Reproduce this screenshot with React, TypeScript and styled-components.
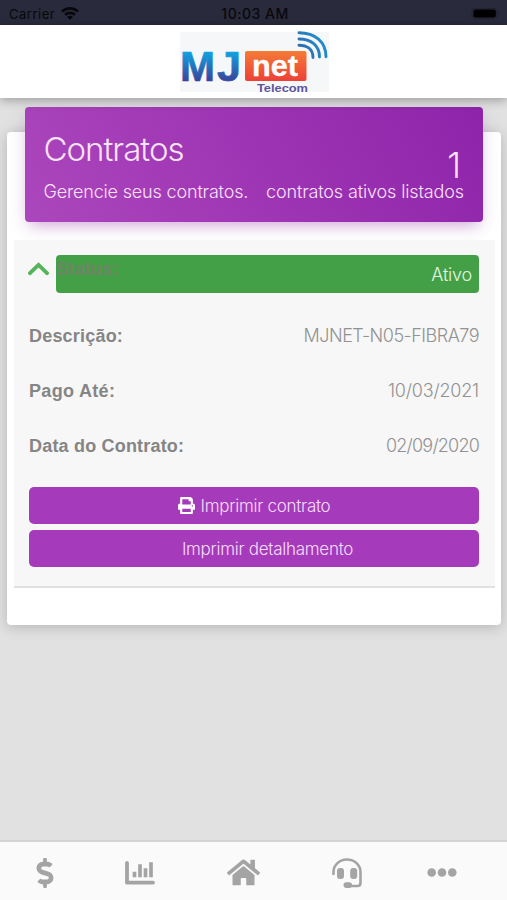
import React from "react";
import styled, { createGlobalStyle } from "styled-components";
import { FaDollarSign, FaHome, FaPrint } from "react-icons/fa";

const light = `"Inter", "Liberation Sans", sans-serif`;
const bold = `"Liberation Sans", Arial, sans-serif`;

const GlobalStyle = createGlobalStyle`
  * { box-sizing: border-box; }
  body { margin: 0; background: #e1e1e1; font-family: ${light}; font-weight: 300; }
`;

const Screen = styled.div`
  width: 507px;
  height: 900px;
  display: flex;
  flex-direction: column;
  overflow: hidden;
  background: #e1e1e1;
`;

const StatusBar = styled.div`
  height: 25px;
  flex: none;
  display: grid;
  grid-template-columns: 1fr auto 1fr;
  align-items: center;
  padding: 2px 6px 0 9px;
  background: #292a3b;
  color: #08080c;
  font-size: 13px;
  font-weight: 400;
`;

const Carrier = styled.div`
  display: flex;
  align-items: center;
  gap: 6px;
  letter-spacing: 0.5px;
`;

const Clock = styled.div`
  font-weight: 500;
  font-size: 14px;
  letter-spacing: 0.5px;
`;

const BatterySlot = styled.div`
  display: flex;
  justify-content: flex-end;
`;

const Header = styled.header`
  height: 73px;
  flex: none;
  display: flex;
  justify-content: center;
  padding: 6px 0 0 1px;
  background: #fff;
  box-shadow: 0 2px 10px rgba(0, 0, 0, 0.32);
  z-index: 1;
`;

const Main = styled.main`
  flex: 1;
  padding: 34px 6px 0 7px;
`;

const Card = styled.section`
  height: 493px;
  padding: 0 6px 0 7px;
  border-radius: 4px;
  background: #fff;
  box-shadow: 0 2px 14px rgba(0, 0, 0, 0.2);
  display: flex;
  flex-direction: column;
`;

const Banner = styled.div`
  height: 115px;
  flex: none;
  margin: -25px 12px 18px 11px;
  padding: 0 19px 0 18.5px;
  border-radius: 4px;
  display: flex;
  justify-content: space-between;
  color: #f9e2fc;
  background: linear-gradient(60deg, #ab47bc, #a138b5 40%, #8e24aa);
  box-shadow: 0 5px 20px rgba(100, 20, 120, 0.1), 0 8px 13px -6px rgba(156, 39, 176, 0.35);
`;

const BannerColumn = styled.div<{ $end?: boolean }>`
  display: flex;
  flex-direction: column;
  align-items: ${(p) => (p.$end ? "flex-end" : "flex-start")};
  padding-top: ${(p) => (p.$end ? "42px" : "22px")};
`;

const Title = styled.h1`
  margin: 0;
  height: 52px;
  font-size: 33px;
  font-weight: 300;
  line-height: 40px;
  letter-spacing: -1px;
`;

const Count = styled.div`
  height: 32px;
  padding-right: 3px;
  font-size: 35px;
  font-weight: 300;
  line-height: 32px;
`;

const Caption = styled.div<{ $spacing: number }>`
  font-size: 18px;
  line-height: 22px;
  white-space: nowrap;
  letter-spacing: ${(p) => p.$spacing}px;
`;

const Panel = styled.div`
  height: 348px;
  padding: 15px 16px 0 15px;
  background: #f7f7f7;
  border-bottom: 2px solid #e1e1e1;
`;

const StatusRow = styled.div`
  display: flex;
  height: 38px;
`;

const Toggle = styled.div`
  width: 27px;
  padding-top: 7px;
  color: #55b45a;
  svg { display: block; margin-left: -1px; }
`;

const StatusPill = styled.div`
  flex: 1;
  display: flex;
  justify-content: space-between;
  padding: 0 7px 0 0;
  border-radius: 4px;
  background: #43a047;
  color: #e2f7e2;
  font-size: 18px;
  line-height: 39px;
`;

const StatusLabel = styled.span`
  color: #6f8368;
  font: bold 18px/28px ${bold};
  letter-spacing: 0.2px;
`;

const StatusValue = styled.span`
  letter-spacing: -0.2px;
`;

const Fields = styled.div`
  padding-top: 15px;
`;

const Field = styled.div`
  height: 55px;
  display: flex;
  align-items: center;
  justify-content: space-between;
  color: #929292;
`;

const FieldLabel = styled.span<{ $spacing: number }>`
  font: bold 18px/22px ${bold};
  color: #858585;
  letter-spacing: ${(p) => p.$spacing}px;
`;

const FieldValue = styled.span<{ $spacing: number }>`
  font-size: 18px;
  letter-spacing: ${(p) => p.$spacing}px;
`;

const Actions = styled.div`
  display: grid;
  gap: 6px;
  padding-top: 14px;
`;

const Action = styled.button<{ $shift?: number; $spacing: number }>`
  height: 37px;
  border: 0;
  border-radius: 5px;
  padding: 0 0 0 ${(p) => p.$shift || 0}px;
  display: flex;
  align-items: center;
  justify-content: center;
  gap: 6px;
  background: #a53bba;
  color: #f7dcfb;
  font: 300 17px/22px ${light};
  letter-spacing: ${(p) => p.$spacing}px;
  svg { color: #fff; }
`;

const TabBar = styled.nav`
  height: 60px;
  flex: none;
  display: grid;
  grid-template-columns: 90px 100px 106px 101px 90px;
  border-top: 2px solid #d3d3d3;
  background: #fafafa;
  color: #a4a4a4;
`;

const Tab = styled.a`
  display: flex;
  align-items: center;
  justify-content: center;
  padding-top: 3px;
`;

const Wifi = () => (
  <svg width="18" height="13" viewBox="0 0 18 13" fill="none" stroke="currentColor" strokeWidth="2.7">
    <path d="M1 4.6C5.5.4 12.5.4 17 4.6M4 7.8c2.8-2.6 7.2-2.6 10 0" />
    <path d="M9 12.8 6.1 9.9c1.6-1.4 4.2-1.4 5.8 0z" fill="currentColor" stroke="none" />
  </svg>
);

const Battery = () => (
  <svg width="30" height="12" viewBox="0 0 30 12">
    <rect x="1" y=".3" width="25" height="10.4" rx="3" fill="none" stroke="#202130" />
    <rect x="2.4" y="1.5" width="22.4" height="8" rx="2" fill="#000" />
    <path d="M27.5 3.5v4c1.3-.5 1.3-3.5 0-4z" fill="#202130" />
  </svg>
);

const ChevronUp = () => (
  <svg width="21" height="14" viewBox="0 0 21 14" fill="none" stroke="currentColor" strokeWidth="3.8" strokeLinecap="round">
    <path d="M2 11.2 10.5 2.8 19 11.2" />
  </svg>
);

const Logo = () => (
  <svg width="149" height="63" viewBox="0 0 149 63">
    <defs>
      <linearGradient id="letters" gradientUnits="userSpaceOnUse" x1="0" y1="20" x2="0" y2="51">
        <stop stopColor="#10a5e2" />
        <stop offset="1" stopColor="#394199" />
      </linearGradient>
      <linearGradient id="plate" x1="0" y1="0" x2="0" y2="1">
        <stop stopColor="#f47b36" />
        <stop offset="1" stopColor="#ed4037" />
      </linearGradient>
      <linearGradient id="waves" gradientUnits="userSpaceOnUse" x1="118" y1="25" x2="147" y2="4">
        <stop stopColor="#3563a8" />
        <stop offset="1" stopColor="#189bd5" />
      </linearGradient>
    </defs>
    <rect y="1" width="149" height="60" fill="#f6f7f8" />
    <g fontFamily="Liberation Sans, Arial, sans-serif" fontWeight="700">
      <g fill="url(#letters)" stroke="url(#letters)" strokeWidth=".7" fontSize="42">
        <text x="0" y="49.5" textLength="35" lengthAdjust="spacingAndGlyphs">M</text>
        <text x="37" y="49.5" textLength="24" lengthAdjust="spacingAndGlyphs">J</text>
      </g>
      <rect x="65" y="20" width="61.5" height="30" rx="2" fill="url(#plate)" />
      <text x="72" y="45" fill="#fff" stroke="#fff" strokeWidth=".3" fontSize="30" textLength="46" lengthAdjust="spacingAndGlyphs">net</text>
      <text x="77" y="60.5" fill="#5c549f" fontSize="11" textLength="51" lengthAdjust="spacingAndGlyphs">Telecom</text>
    </g>
    <g fill="none" stroke="url(#waves)" strokeWidth="2.9" strokeLinecap="round">
      <path d="M119 1.8c16 0 27 9 27 24" />
      <path d="M119 8c12 0 20.5 6.5 20.5 18" />
      <path d="M119 14.2c8 0 14 4 14 12.3" />
    </g>
  </svg>
);

const Chart = () => (
  <svg width="30" height="24" viewBox="0 0 30 24" fill="none" stroke="currentColor" strokeLinecap="round" strokeLinejoin="round">
    <path d="M2 2v19.7h26" strokeWidth="3.8" />
    <path d="M9.5 12.5v2M15 5v9.5M20.5 9v5.5M26 3v11.5" strokeWidth="3.7" strokeLinecap="square" />
  </svg>
);

const Headset = () => (
  <svg width="30" height="30" viewBox="0 0 30 30">
    <path d="M1.5 16v-2C1.5 7 7.5 1.5 15 1.5S28.5 7 28.5 14v11c0 2-1 3-3 3H15" fill="none" stroke="currentColor" strokeWidth="2.6" strokeLinecap="round" />
    <rect x="5" y="10" width="7" height="11" rx="3" fill="currentColor" />
    <rect x="18.2" y="10" width="7" height="11" rx="3" fill="currentColor" />
    <rect x="11.5" y="24.3" width="8.5" height="5.6" rx="2.8" fill="currentColor" />
  </svg>
);

const More = () => (
  <svg width="30" height="9" viewBox="0 0 30 9" fill="currentColor">
    <circle cx="4.7" cy="4.5" r="4.3" />
    <circle cx="15" cy="4.5" r="4.3" />
    <circle cx="25.3" cy="4.5" r="4.3" />
  </svg>
);

const fields = [
  { label: "Descrição:", value: "MJNET-N05-FIBRA79", labelSpacing: 0.2, valueSpacing: -0.5 },
  { label: "Pago Até:", value: "10/03/2021", labelSpacing: 0.32, valueSpacing: -0.2 },
  { label: "Data do Contrato:", value: "02/09/2020", labelSpacing: 0.19, valueSpacing: -0.8 },
];

export default function App() {
  return (
    <Screen>
      <GlobalStyle />
      <StatusBar>
        <Carrier>Carrier <Wifi /></Carrier>
        <Clock>10:03 AM</Clock>
        <BatterySlot><Battery /></BatterySlot>
      </StatusBar>
      <Header><Logo /></Header>
      <Main>
        <Card>
          <Banner>
            <BannerColumn>
              <Title>Contratos</Title>
              <Caption $spacing={-0.17}>Gerencie seus contratos.</Caption>
            </BannerColumn>
            <BannerColumn $end>
              <Count>1</Count>
              <Caption $spacing={-0.13}>contratos ativos listados</Caption>
            </BannerColumn>
          </Banner>
          <Panel>
            <StatusRow>
              <Toggle><ChevronUp /></Toggle>
              <StatusPill>
                <StatusLabel>Status:</StatusLabel>
                <StatusValue>Ativo</StatusValue>
              </StatusPill>
            </StatusRow>
            <Fields>
              {fields.map((f) => (
                <Field key={f.label}>
                  <FieldLabel $spacing={f.labelSpacing}>{f.label}</FieldLabel>
                  <FieldValue $spacing={f.valueSpacing}>{f.value}</FieldValue>
                </Field>
              ))}
            </Fields>
            <Actions>
              <Action $spacing={-0.28}><FaPrint size={17} />Imprimir contrato</Action>
              <Action $spacing={-0.28} $shift={27}>Imprimir detalhamento</Action>
            </Actions>
          </Panel>
        </Card>
      </Main>
      <TabBar>
        <Tab><FaDollarSign size={30} /></Tab>
        <Tab><Chart /></Tab>
        <Tab><FaHome size={33} /></Tab>
        <Tab><Headset /></Tab>
        <Tab><More /></Tab>
      </TabBar>
    </Screen>
  );
}
